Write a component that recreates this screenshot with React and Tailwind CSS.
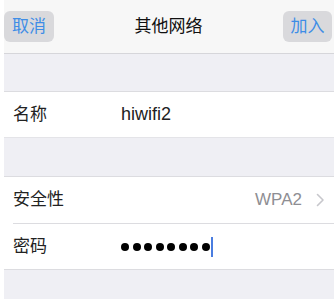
import React from 'react';

const font = { fontFamily: '"Liberation Sans", "Noto Sans CJK SC", sans-serif' };

const Chevron = () => (
  <svg width="9" height="14" viewBox="0 0 9 14" fill="none">
    <path d="M1.5 1.5 L7 7 L1.5 12.5" stroke="#c7c7cc" strokeWidth="1.6" strokeLinecap="round" strokeLinejoin="round" />
  </svg>
);

const App = () => {
  return (
    <div className="w-[334px] h-[299px] bg-white pl-[4px] overflow-hidden" style={font}>
      <div className="h-full flex flex-col bg-[#efeff4]">
        {/* nav bar */}
        <header className="h-[54px] shrink-0 bg-[#f7f7f7] border-b border-[#d6d6da] flex items-center justify-between pr-[2px]">
          <button className="w-[50px] h-[31px] rounded-[6px] bg-[#d9d9dc] text-[#3e8de6] text-[17px] leading-none">
            取消
          </button>
          <h1 className="text-[17px] text-[#111] font-normal leading-none">其他网络</h1>
          <button className="w-[49px] h-[31px] rounded-[6px] bg-[#d9d9dc] text-[#3e8de6] text-[17px] leading-none">
            加入
          </button>
        </header>

        <div className="h-[38px] shrink-0 border-b border-[#dcdce0]" />

        <div className="h-[46px] shrink-0 bg-white flex items-center pl-[9px] border-b border-[#e4e4e8]">
          <span className="w-[108px] text-[17px] text-[#222]">名称</span>
          <span className="text-[18px] text-[#222]">hiwifi2</span>
        </div>

        <div className="h-[39px] shrink-0 border-b border-[#dcdce0]" />

        <div className="bg-white shrink-0">
          <div className="h-[46px] flex items-center pl-[9px]">
            <span className="flex-1 text-[17px] text-[#222]">安全性</span>
            <span className="text-[17px] text-[#8e8e93] mr-[14px]">WPA2</span>
            <span className="mr-[9px] flex items-center"><Chevron /></span>
          </div>
          <div className="ml-[9px] h-px bg-[#dcdce0]" />
          <div className="h-[46px] flex items-center pl-[9px] border-b border-[#dcdce0]">
            <span className="w-[108px] text-[17px] text-[#222]">密码</span>
            <div className="flex items-center gap-[3.5px]">
              {Array.from({ length: 8 }).map((_, i) => (
                <span key={i} className="w-[8px] h-[8px] rounded-full bg-black" />
              ))}
              <span className="-ml-[2px] w-[2px] h-[20px] bg-[#4a7de0]" />
            </div>
          </div>
        </div>

        <div className="flex-1" />
      </div>
    </div>
  );
};

export default App;
